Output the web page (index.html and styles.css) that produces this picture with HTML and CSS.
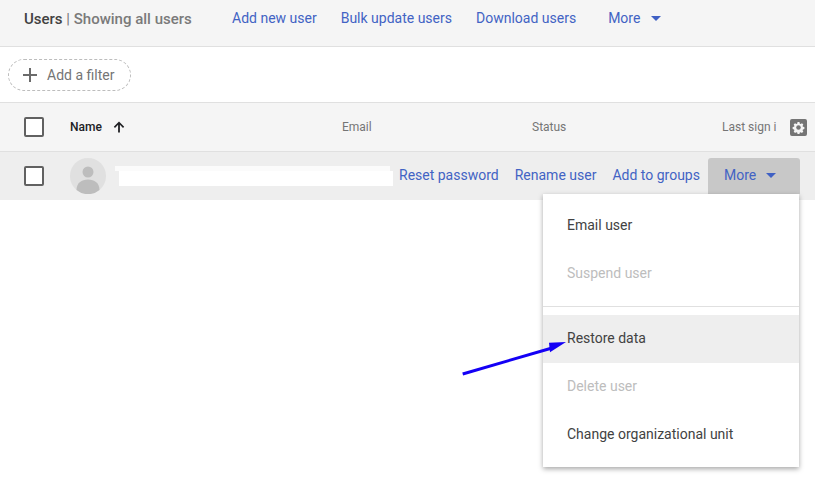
FILE: index.html
```html
<!DOCTYPE html>
<html lang="en">
<head>
<meta charset="utf-8">
<title>Users</title>
<link rel="stylesheet" href="styles.css">
</head>
<body>
<header class="topbar">
  <div class="title"><span class="title-main">Users</span> <span class="title-sep">|</span> <span class="title-sub">Showing all users</span></div>
  <nav class="actions">
    <a class="link">Add new user</a>
    <a class="link">Bulk update users</a>
    <a class="link">Download users</a>
    <a class="link more-top">More <span class="caret"></span></a>
  </nav>
</header>
<section class="filterbar">
  <div class="chip">
    <svg class="plus" width="16" height="16" viewBox="0 0 16 16"><path d="M7 1h2v6h6v2H9v6H7V9H1V7h6z" fill="#6b6b6b"/></svg>
    <span>Add a filter</span>
  </div>
</section>
<section class="thead">
  <span class="checkbox"></span>
  <div class="col-name">Name
    <svg class="sort" width="12" height="12" viewBox="0 0 12 12"><path d="M6 .5.8 5.700l1.200 1.200L5.100 3.800v7.700h1.800V3.800L10 6.900l1.200-1.200z" fill="#202124"/></svg>
  </div>
  <div class="col-email">Email</div>
  <div class="col-status">Status</div>
  <div class="col-last">Last sign i</div>
  <svg class="gear" width="18" height="18" viewBox="0 0 18 18">
    <rect width="18" height="18" rx="2" fill="#757575"/>
    <path d="M9 3.200l1 .1.4 1.600.9.4 1.400-.8 1.400 1.400-.8 1.400.4.9 1.500.4v2l-1.500.4-.4.9.8 1.400-1.400 1.400-1.400-.8-.9.4-.4 1.500H8l-.4-1.500-.9-.4-1.400.8-1.400-1.400.8-1.400-.4-.9-1.500-.4v-2l1.500-.4.4-.9-.8-1.400 1.400-1.400 1.400.8.9-.4L8 3.300z" fill="#f5f5f5"/>
    <circle cx="9" cy="9" r="2.400" fill="#757575"/>
  </svg>
</section>
<section class="row">
  <span class="checkbox"></span>
  <svg class="avatar" width="36" height="36" viewBox="0 0 36 36">
    <circle cx="18" cy="18" r="18" fill="#e0e0e0"/>
    <circle cx="18" cy="14" r="5.500" fill="#bdbdbd"/>
    <path d="M6.500 32c0-7 5-10.500 11.500-10.500S29.500 25 29.500 32a18 18 0 0 1-23 0z" fill="#bdbdbd"/>
  </svg>
  <div class="redacted"><span class="redacted-a"></span><span class="redacted-b"></span></div>
  <a class="link reset">Reset password</a>
  <a class="link rename">Rename user</a>
  <a class="link groups">Add to groups</a>
  <button class="more-btn">More <span class="caret"></span></button>
</section>

<div class="menu">
  <div class="menu-group">
    <div class="item">Email user</div>
    <div class="item disabled">Suspend user</div>
  </div>
  <div class="menu-group second">
    <div class="item active">Restore data</div>
    <div class="item disabled">Delete user</div>
    <div class="item">Change organizational unit</div>
  </div>
</div>

<svg class="pointer" width="110" height="40" viewBox="0 0 110 40">
  <path d="M.7 34 90 8" stroke="#1400f5" stroke-width="3" fill="none"/>
  <path d="M104 2 87 2.700 88 12.300z" fill="#1400f5"/>
</svg>
</body>
</html>
```

FILE: styles.css
```css
* { box-sizing: border-box; }
html, body { margin: 0; padding: 0; }
body {
  width: 815px;
  height: 479px;
  overflow: hidden;
  position: relative;
  background: #fff;
  font-family: Roboto, "Liberation Sans", sans-serif;
  font-size: 14px;
  color: #212121;
}
.link { color: #4263c4; white-space: nowrap; }

.topbar {
  height: 47px;
  background: #f5f5f5;
  border-bottom: 1px solid #e0e0e0;
  display: flex;
  align-items: center;
  padding: 0 0 10px 24px;
}
.title { width: 208px; font-size: 15px; padding-top: 2px; white-space: nowrap; }
.title-main { font-weight: 500; color: #424242; }
.title-sep { color: #757575; }
.title-sub { font-weight: 500; color: #7a7a7a; }
.actions { display: flex; gap: 24px; }
.more-top { margin-left: 8px; }
.caret {
  display: inline-block;
  width: 0;
  height: 0;
  margin-left: 7px;
  vertical-align: 2px;
  border-left: 5px solid transparent;
  border-right: 5px solid transparent;
  border-top: 5px solid #3f60c4;
}

.filterbar {
  height: 56px;
  border-bottom: 1px solid #e0e0e0;
  display: flex;
  align-items: center;
  padding: 0 0 0 8px;
}
.chip {
  width: 123px;
  height: 32px;
  border: 1px dashed #bdbdbd;
  border-radius: 16px;
  display: flex;
  align-items: center;
  gap: 9px;
  padding-left: 13px;
  color: #757575;
}

.thead {
  height: 49px;
  background: #f5f5f5;
  border-bottom: 1px solid #e0e0e0;
  display: flex;
  align-items: center;
  padding-left: 24px;
  font-size: 12px;
  color: #757575;
}
.checkbox {
  flex: none;
  width: 20px;
  height: 20px;
  background: #fff;
  border: 2px solid #616161;
  border-radius: 2px;
}
.col-name {
  width: 272px;
  margin-left: 26px;
  font-weight: 500;
  color: #202124;
  display: flex;
  align-items: center;
  gap: 11px;
}
.col-email { width: 190px; }
.col-status { width: 190px; }
.col-last { width: 58px; margin-right: 10px; white-space: nowrap; overflow: hidden; }
.gear { flex: none; width: 17px; height: 17px; }

.row {
  height: 48px;
  background: #eeeeee;
  display: flex;
  align-items: center;
  padding-left: 24px;
}
.avatar { flex: none; margin-left: 26px; }
.redacted {
  width: 278px;
  height: 20px;
  margin-left: 9px;
  display: flex;
  flex-direction: column;
}
.redacted-a { height: 5px; background: #fbfbfb; margin-right: 3px; }
.redacted-b { height: 15px; background: #fff; margin-left: 4px; }
.row .link { position: relative; top: -1px; }
.reset { margin-left: 6px; }
.rename { margin-left: 16px; }
.groups { margin-left: 16px; }
.more-btn {
  flex: none;
  width: 92px;
  height: 36px;
  margin: 0 0 0 8px;
  padding: 0 0 2px 16px;
  text-align: left;
  background: #c8c8c8;
  border: 0;
  border-radius: 3px 3px 0 0;
  font: inherit;
  color: #4263c4;
}
.more-btn .caret { margin-left: 6px; }

.menu {
  position: absolute;
  left: 543px;
  top: 194px;
  width: 256px;
  height: 273px;
  background: #fff;
  box-shadow: 0 2px 5px rgba(0, 0, 0, .35);
}
.menu-group { padding-top: 7px; }
.menu-group.second {
  border-top: 1px solid #e0e0e0;
  padding-top: 8px;
  margin-top: 9px;
}
.item {
  height: 48px;
  display: flex;
  align-items: center;
  padding-left: 24px;
  color: #424242;
}
.second .item { padding-bottom: 2px; }
.item.disabled { color: #bdbdbd; }
.item.active { background: #eeeeee; }

.pointer {
  position: absolute;
  left: 462px;
  top: 340px;
}
```
